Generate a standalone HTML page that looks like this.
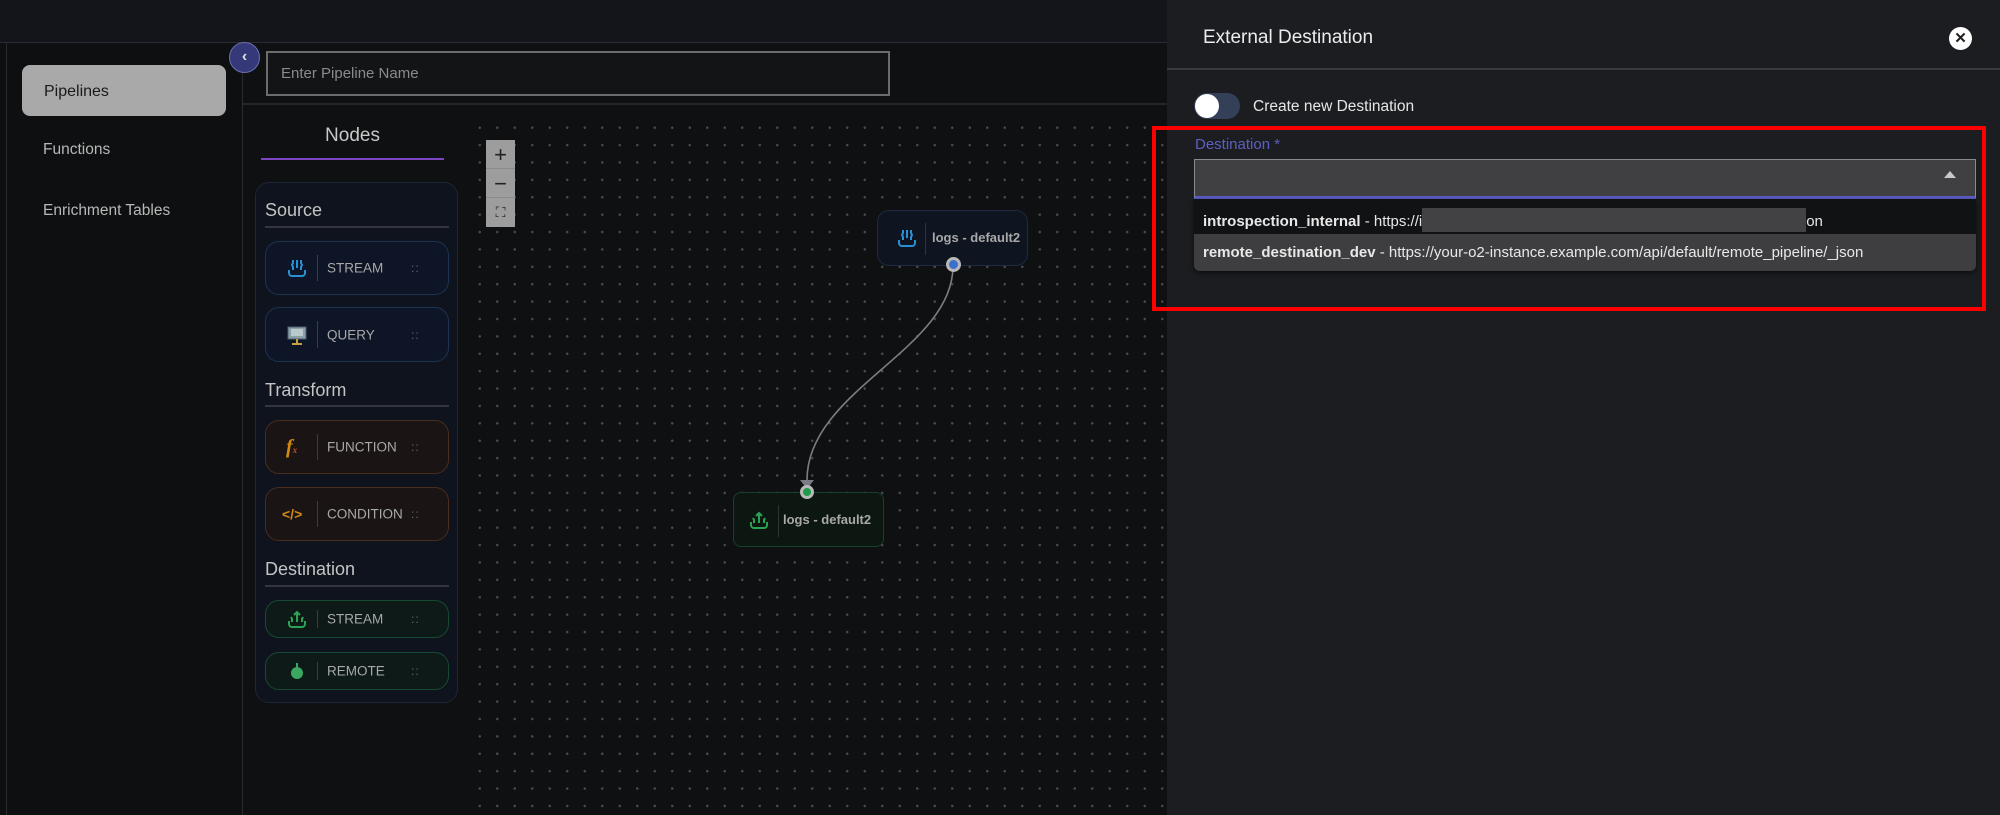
<!DOCTYPE html>
<html><head><meta charset="utf-8"><style>
*{box-sizing:border-box;margin:0;padding:0}
body{width:2000px;height:815px;overflow:hidden;background:#0f1011;font-family:"Liberation Sans",sans-serif;position:relative}
.a{position:absolute}
.top{left:0;top:0;width:1167px;height:43px;background:#14151a;border-bottom:1px solid #2a2b30}
.side{left:0;top:43px;width:243px;height:772px;background:#0e0f10;border-right:1px solid #2a2b30}
.side .vl{left:6px;top:0;width:1px;height:772px;background:#2a2b30}
.btn{left:22px;top:65px;width:204px;height:51px;background:#a9a9a9;border-radius:8px;color:#1a1a1a;font-size:16px;padding:18px 0 0 22px}
.nav{left:43px;font-size:15.5px;color:#b8b8b8}
.canvas{left:478px;top:120px;width:689px;height:695px;background-color:#0f1011;background-image:radial-gradient(circle,#4a4b4e 1.1px,transparent 1.3px);background-size:17.5px 17.4px;background-position:-7px -1px}
.card{left:265px;width:184px;border-radius:14px;font-size:13.5px;color:#a8a8a8;}
.card .ic{position:absolute;left:20px;top:50%;transform:translateY(-50%);width:22px;height:22px}
.card .dv{position:absolute;left:51px;top:25%;height:50%;width:1px;background:#3a3d44}
.card .tx{position:absolute;left:61px;top:50%;transform:translateY(-50%)}
.card .dr{position:absolute;left:145px;top:50%;transform:translateY(-50%);font-size:12px;color:#666;letter-spacing:1px}
.lbl{left:265px;font-size:18px;color:#c4c4c4}
.ln{left:265px;width:184px;height:2px;background:#33363d}
</style></head><body>
<div class="a top"></div>
<div class="a side"><div class="a vl"></div></div>
<div class="a btn">Pipelines</div>
<div class="a nav" style="top:141px">Functions</div>
<div class="a nav" style="top:202px">Enrichment Tables</div>
<div class="a" style="left:243px;top:43px;width:924px;height:62px;background:#0f1011;border-bottom:2px solid #25262a"></div>
<div class="a" style="left:266px;top:51px;width:624px;height:45px;border:2px solid #6c6c6c;background:#131416;color:#8a8a8a;font-size:15px;padding:12px 0 0 13px">Enter Pipeline Name</div>
<div class="a" style="left:229px;top:42px;width:31px;height:31px;border-radius:50%;background:#35397a;border:1px solid #6b6fb0;color:#e0e0e0;font-size:16px;text-align:center;line-height:28px;font-weight:bold">&#8249;</div>
<div class="a" style="left:243px;top:107px;width:235px;height:708px;background:#0f1011"></div>
<div class="a" style="left:261px;top:125px;width:183px;text-align:center;font-size:19px;color:#c8c8c8">Nodes</div>
<div class="a" style="left:261px;top:158px;width:183px;height:2px;background:#7b45c4"></div>
<div class="a" style="left:255px;top:182px;width:203px;height:521px;background:#0e131d;border:1px solid #1e2534;border-radius:14px"></div>
<div class="a lbl" style="top:200px">Source</div><div class="a ln" style="top:226px"></div>
<div class="a card" style="top:241px;height:54px;background:#0d1526;border:1px solid #1d3352">
<svg class="ic" viewBox="0 0 22 22"><path d="M3 13v3a3 3 0 0 0 3 3h10a3 3 0 0 0 3-3v-3M7 3v3l-1 2 1 2v3M11 3v8M15 3v3l1 2-1 2v3" stroke="#2b8fd6" stroke-width="2" fill="none"/></svg>
<div class="dv"></div><div class="tx">STREAM</div><div class="dr">::</div></div>
<div class="a card" style="top:307px;height:55px;background:#0d1526;border:1px solid #1d3352">
<svg class="ic" viewBox="0 0 22 22"><rect x="2" y="3" width="18" height="12" fill="#8aa0a8" stroke="#50606a"/><rect x="5" y="5" width="12" height="7" fill="#b9c9cc"/><rect x="10" y="15" width="2" height="4" fill="#c8a040"/><rect x="6" y="19" width="10" height="2" fill="#c8a040"/></svg>
<div class="dv"></div><div class="tx">QUERY</div><div class="dr">::</div></div>
<div class="a lbl" style="top:380px">Transform</div><div class="a ln" style="top:405px"></div>
<div class="a card" style="top:420px;height:54px;background:#1a1414;border:1px solid #4a2d1c">
<div class="ic" style="color:#d48a10;font-style:italic;font-weight:bold;font-family:'Liberation Serif',serif;font-size:20px">f<span style="font-size:9px;color:#c0502a">x</span></div>
<div class="dv"></div><div class="tx">FUNCTION</div><div class="dr">::</div></div>
<div class="a card" style="top:487px;height:54px;background:#1a1414;border:1px solid #4a2d1c">
<div class="ic" style="color:#d48a10;font-weight:bold;font-size:14px;line-height:22px;left:16px;width:30px">&lt;/&gt;</div>
<div class="dv"></div><div class="tx">CONDITION</div><div class="dr">::</div></div>
<div class="a lbl" style="top:559px">Destination</div><div class="a ln" style="top:585px"></div>
<div class="a card" style="top:600px;height:38px;background:#0d1a18;border:1px solid #174a32">
<svg class="ic" viewBox="0 0 22 22"><path d="M3 13v3a3 3 0 0 0 3 3h10a3 3 0 0 0 3-3v-3M11 14V4M8 7l3-3 3 3M6 14v-3l-1-2M16 14v-3l1-2" stroke="#2aa355" stroke-width="2" fill="none"/></svg>
<div class="dv"></div><div class="tx">STREAM</div><div class="dr">::</div></div>
<div class="a card" style="top:652px;height:38px;background:#0d1a18;border:1px solid #174a32">
<svg class="ic" viewBox="0 0 22 22"><circle cx="11" cy="13" r="6" fill="#3aa860"/><rect x="10" y="3" width="2" height="5" fill="#3aa860"/></svg>
<div class="dv"></div><div class="tx">REMOTE</div><div class="dr">::</div></div>
<div class="a canvas"></div>
<div class="a" style="left:486px;top:140px;width:29px;height:87px;background:#9d9d9d;color:#222;text-align:center;font-size:22px;line-height:29px">
<div style="border-bottom:1px solid #8a8a8a;height:29px">+</div><div style="border-bottom:1px solid #8a8a8a;height:29px">&minus;</div><div style="font-size:14px">&#9974;</div></div>
<svg class="a" style="left:0;top:0" width="1167" height="815"><path d="M953 266 C953 350 807 390 807 480" stroke="#7a7d85" stroke-width="1.6" fill="none"/><path d="M800 480h14l-7 9z" fill="#7a7d85"/></svg>
<div class="a" style="left:877px;top:210px;width:151px;height:56px;background:#0e1420;border:1px solid #1d2a40;border-radius:12px">
<svg class="a" style="left:18px;top:16px" width="22" height="22" viewBox="0 0 22 22"><path d="M3 13v3a3 3 0 0 0 3 3h10a3 3 0 0 0 3-3v-3M7 3v3l-1 2 1 2v3M11 3v8M15 3v3l1 2-1 2v3" stroke="#2b8fd6" stroke-width="2" fill="none"/></svg>
<div class="a" style="left:47px;top:12px;width:1px;height:32px;background:#333"></div>
<div class="a" style="left:54px;top:19px;font-size:13px;font-weight:bold;color:#a8a8a8;white-space:nowrap">logs - default2</div></div>
<div class="a" style="left:946px;top:257px;width:15px;height:15px;border-radius:50%;background:#3a6fcc;border:3px solid #b8b8b8"></div>
<div class="a" style="left:733px;top:492px;width:151px;height:55px;background:#0d1712;border:1px solid #17402a;border-radius:8px">
<svg class="a" style="left:14px;top:16px" width="22" height="22" viewBox="0 0 22 22"><path d="M3 13v3a3 3 0 0 0 3 3h10a3 3 0 0 0 3-3v-3M11 14V4M8 7l3-3 3 3M6 14v-3l-1-2M16 14v-3l1-2" stroke="#2aa355" stroke-width="2" fill="none"/></svg>
<div class="a" style="left:44px;top:12px;width:1px;height:32px;background:#333"></div>
<div class="a" style="left:49px;top:19px;font-size:13px;font-weight:bold;color:#a8a8a8;white-space:nowrap">logs - default2</div></div>
<div class="a" style="left:800px;top:485px;width:14px;height:14px;border-radius:50%;background:#1f9a4a;border:3px solid #b8b8b8"></div>
<!-- right panel -->
<div class="a" style="left:1167px;top:0;width:833px;height:815px;background:#1c1d21"></div>
<div class="a" style="left:1203px;top:27px;font-size:19px;color:#ececec">External Destination</div>
<div class="a" style="left:1949px;top:27px;width:23px;height:23px;border-radius:50%;background:#fff;color:#1c1d21;font-size:15px;font-weight:bold;text-align:center;line-height:23px">&#x2715;</div>
<div class="a" style="left:1167px;top:68px;width:833px;height:2px;background:#3a3b40"></div>
<div class="a" style="left:1194px;top:93px;width:46px;height:26px;border-radius:13px;background:#334058"></div>
<div class="a" style="left:1195px;top:94px;width:24px;height:24px;border-radius:50%;background:#fff"></div>
<div class="a" style="left:1253px;top:98px;font-size:15.5px;color:#e6e6e6">Create new Destination</div>
<div class="a" style="left:1195px;top:136px;font-size:15px;color:#5d5fc0">Destination *</div>
<div class="a" style="left:1194px;top:159px;width:782px;height:40px;background:#404043;border:1px solid #8a8a8c;border-bottom:3px solid #5b5fc7"></div>
<div class="a" style="left:1944px;top:171px;width:0;height:0;border-left:6px solid transparent;border-right:6px solid transparent;border-bottom:7px solid #c8c8c8"></div>
<div class="a" style="left:1194px;top:199px;width:782px;height:72px;border-radius:0 0 6px 6px;box-shadow:0 2px 6px rgba(0,0,0,.6);overflow:hidden">
<div style="height:35px;background:#111214;color:#e8e8e8;font-size:15px;padding:9px 0 0 9px;white-space:nowrap"><b>introspection_internal</b> - https://i<span style="display:inline-block;width:384px;height:24px;background:#424244;vertical-align:-6px"></span>on</div>
<div style="height:37px;background:#3e3e41;color:#e8e8e8;font-size:15px;padding:10px 0 0 9px;white-space:nowrap"><b>remote_destination_dev</b> - https://your-o2-instance.example.com/api/default/remote_pipeline/_json</div></div>
<div class="a" style="left:1152px;top:126px;width:834px;height:185px;border:4px solid #f00"></div>
</body></html>
